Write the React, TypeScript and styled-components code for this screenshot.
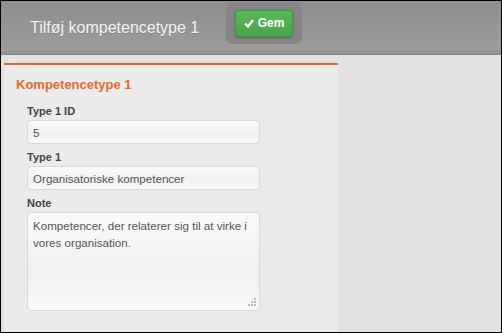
import styled, { createGlobalStyle } from 'styled-components';

const GlobalStyle = createGlobalStyle`
  html, body {
    margin: 0;
    padding: 0;
    background: #000;
  }
  * {
    box-sizing: border-box;
  }
`;

const Frame = styled.div`
  width: 502px;
  height: 333px;
  border: 1px solid #000;
  background: #e2e2e2;
  overflow: hidden;
  font-family: 'Liberation Sans', Arial, sans-serif;
  display: flex;
  flex-direction: column;
`;

const Header = styled.div`
  height: 54px;
  flex-shrink: 0;
  background: linear-gradient(#8e8e8e, #9c9c9c 90%, #8a8a8a);
  display: flex;
  align-items: flex-start;
  padding-left: 29px;
`;

const Title = styled.h1`
  margin: 18px 0 0;
  width: 168px;
  white-space: nowrap;
  font-size: 16px;
  font-weight: normal;
  color: #f4f4f4;
  text-shadow: 0 1px 0 rgba(0, 0, 0, 0.15);
`;

const ButtonGroup = styled.div`
  margin: 1px 0 0 28px;
  width: 76px;
  height: 42px;
  background: #868686;
  border-radius: 6px;
  padding: 8px 0 0 9px;
`;

const SaveButton = styled.button`
  width: 58px;
  height: 27px;
  border: 1px solid #3d9a3d;
  border-radius: 3px;
  background: linear-gradient(#5cb85c, #47a447);
  box-shadow: 0 1px 2px rgba(0, 0, 0, 0.3);
  color: #fff;
  font-family: 'Liberation Sans', Arial, sans-serif;
  font-weight: bold;
  font-size: 12px;
  display: flex;
  align-items: center;
  justify-content: center;
  gap: 4px;
  padding: 0 0 1px;
`;

const Content = styled.div`
  flex: 1;
  padding: 8px 0 0 3px;
  display: flex;
`;

const Panel = styled.div`
  width: 334px;
  background: #ebebeb;
  border-top: 2px solid #e3692a;
  padding: 12px 0 0 12px;
`;

const SectionTitle = styled.h2`
  margin: 0 0 13px;
  font-size: 13px;
  font-weight: bold;
  color: #e3692a;
`;

const Field = styled.div`
  margin-left: 11px;
  margin-bottom: 7px;
`;

const Label = styled.label`
  display: block;
  font-size: 11px;
  font-weight: bold;
  color: #444;
  margin-bottom: 3px;
`;

const Input = styled.div<{ $tall?: boolean }>`
  width: 233px;
  height: ${(p) => (p.$tall ? '99px' : '24px')};
  border: 1px solid #d8d8d8;
  border-radius: 4px;
  background: linear-gradient(#fafafa, #f0f0f0 60%, #fafafa);
  padding: ${(p) => (p.$tall ? '4px 4px 4px 5px' : '0 5px')};
  display: ${(p) => (p.$tall ? 'block' : 'flex')};
  align-items: center;
  font-size: 11.6px;
  line-height: 17px;
  color: #555;
  position: relative;
`;

const Grip = styled.svg`
  position: absolute;
  right: 3px;
  bottom: 3px;
`;

export default function App() {
  return (
    <>
      <GlobalStyle />
      <Frame>
        <Header>
          <Title>Tilføj kompetencetype 1</Title>
          <ButtonGroup>
            <SaveButton>
              <svg width="10" height="9" viewBox="0 0 10 9">
                <path d="M1 4.5l3 3 5-6.5" stroke="#fff" strokeWidth="2.4" fill="none" />
              </svg>
              Gem
            </SaveButton>
          </ButtonGroup>
        </Header>
        <Content>
          <Panel>
            <SectionTitle>Kompetencetype 1</SectionTitle>
            <Field>
              <Label>Type 1 ID</Label>
              <Input>5</Input>
            </Field>
            <Field>
              <Label>Type 1</Label>
              <Input>Organisatoriske kompetencer</Input>
            </Field>
            <Field>
              <Label>Note</Label>
              <Input $tall>
                Kompetencer, der relaterer sig til at virke i vores organisation.
                <Grip width="9" height="9" viewBox="0 0 9 9">
                  <g fill="#bbb">
                    <rect x="7" y="0" width="2" height="2" />
                    <rect x="4" y="3" width="2" height="2" />
                    <rect x="7" y="3" width="2" height="2" />
                    <rect x="1" y="6" width="2" height="2" />
                    <rect x="4" y="6" width="2" height="2" />
                    <rect x="7" y="6" width="2" height="2" />
                  </g>
                </Grip>
              </Input>
            </Field>
          </Panel>
        </Content>
      </Frame>
    </>
  );
}
